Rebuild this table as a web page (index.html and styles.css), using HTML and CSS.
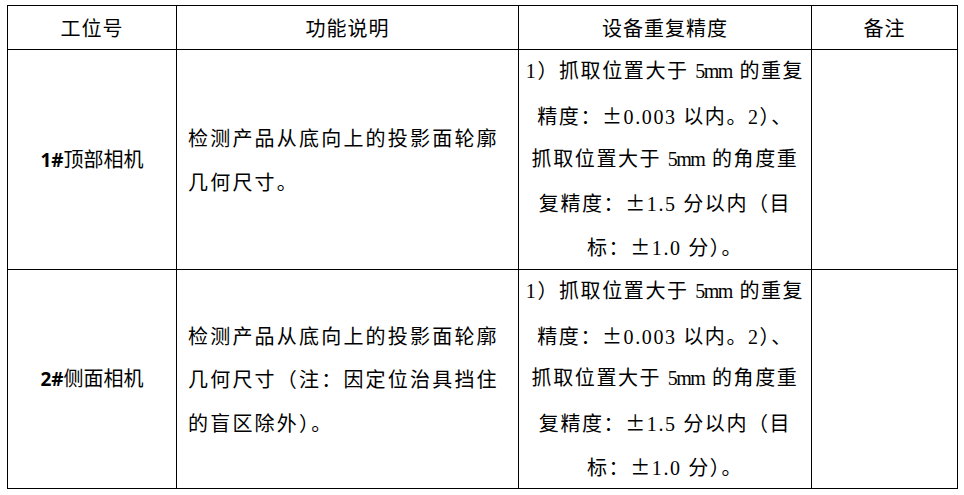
FILE: index.html
```html
<!DOCTYPE html>
<html lang="zh-CN">
<head>
<meta charset="utf-8">
<title>相机精度表</title>
<link rel="stylesheet" href="styles.css">
</head>
<body>
<table class="spec">
  <colgroup>
    <col class="c1"><col class="c2"><col class="c3"><col class="c4">
  </colgroup>
  <thead>
    <tr class="head">
      <th>工位号</th>
      <th>功能说明</th>
      <th>设备重复精度</th>
      <th>备注</th>
    </tr>
  </thead>
  <tbody>
    <tr class="row r1">
      <td class="station"><b class="no">1#</b>顶部相机</td>
      <td class="desc">检测产品从底向上的投影面轮廓几何尺寸。</td>
      <td class="prec">
        <span class="ln">1）抓取位置大于 <span class="mm">5mm</span> 的重复</span>
        <span class="ln">精度：<span class="pm">±</span>0.003 以内。2）、</span>
        <span class="ln">抓取位置大于 <span class="mm">5mm</span> 的角度重</span>
        <span class="ln">复精度：<span class="pm">±</span>1.5 分以内（目</span>
        <span class="ln">标：<span class="pm">±</span>1.0 分）。</span>
      </td>
      <td class="note"></td>
    </tr>
    <tr class="row r2">
      <td class="station"><b class="no">2#</b>侧面相机</td>
      <td class="desc">检测产品从底向上的投影面轮廓几何尺寸（注：因定位治具挡住的盲区除外）。</td>
      <td class="prec">
        <span class="ln">1）抓取位置大于 <span class="mm">5mm</span> 的重复</span>
        <span class="ln">精度：<span class="pm">±</span>0.003 以内。2）、</span>
        <span class="ln">抓取位置大于 <span class="mm">5mm</span> 的角度重</span>
        <span class="ln">复精度：<span class="pm">±</span>1.5 分以内（目</span>
        <span class="ln">标：<span class="pm">±</span>1.0 分）。</span>
      </td>
      <td class="note"></td>
    </tr>
  </tbody>
</table>
</body>
</html>
```
FILE: styles.css
```css
html, body {
  margin: 0;
  padding: 0;
  background: #fff;
}
body {
  padding: 5px 0 0 7px;
  font-family: "Noto Sans CJK SC", sans-serif;
  color: #000;
}
.spec {
  border-collapse: collapse;
  table-layout: fixed;
  width: 950px;
  font-size: 20px;
}
.c1 { width: 169px; }
.c2 { width: 342px; }
.c3 { width: 293px; }
.c4 { width: 146px; }
.spec th, .spec td {
  border: 1px solid #000;
  padding: 0;
  font-weight: normal;
  vertical-align: middle;
}
.head th {
  height: 43px;
  text-align: center;
  letter-spacing: 1px;
  line-height: 43px;
}
.row td {
  line-height: 43.7px;
}
.r1 td { height: 219px; }
.r2 td { height: 218px; }
.station {
  text-align: center;
}
.no {
  font-family: "Open Sans", "Liberation Sans", sans-serif;
  font-weight: 700;
  font-size: 19px;
}
.desc {
  text-align: left;
  padding: 0 8px 0 11px !important;
  letter-spacing: 2.2px;
}
.prec {
  text-align: center;
  font-family: "Liberation Serif", "Noto Sans CJK SC", serif;
  letter-spacing: 1.6px;
}
.ln {
  display: block;
  height: 43.7px;
  white-space: nowrap;
}
.pm {
  font-family: "Noto Sans CJK SC", sans-serif;
}
.mm {
  letter-spacing: -1.5px;
  margin-right: 1px;
}
```
